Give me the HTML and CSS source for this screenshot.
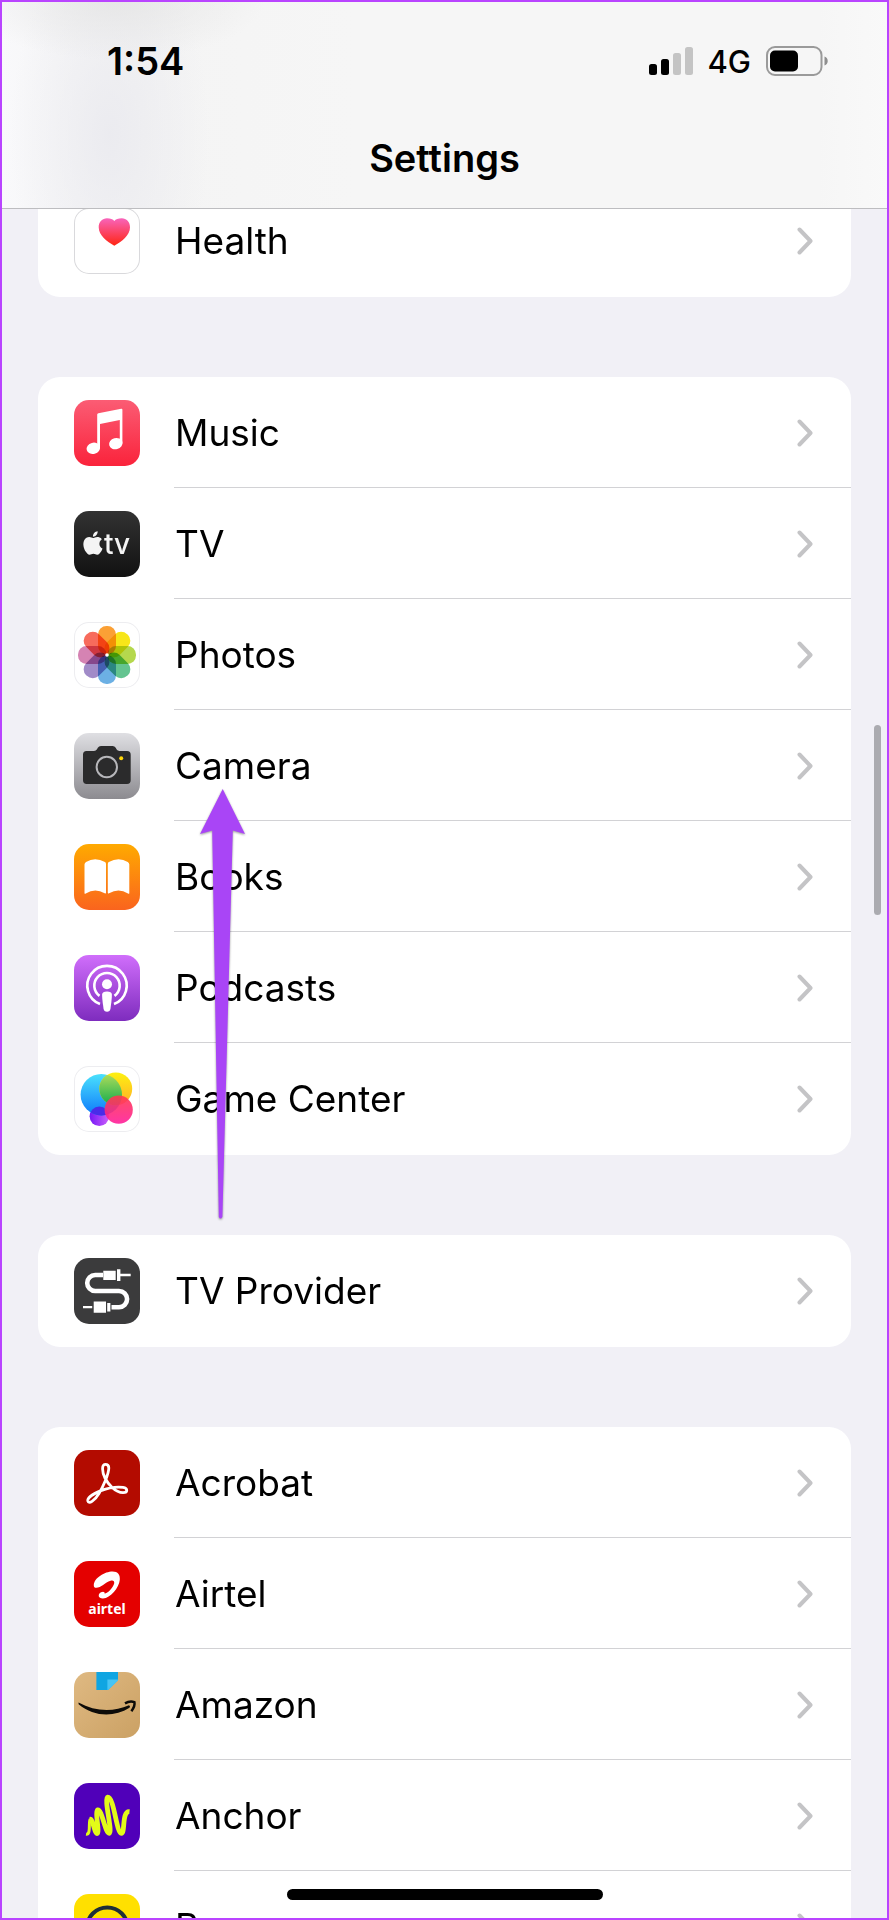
FILE: index.html
```html
<!DOCTYPE html>
<html lang="en">
<head>
    <meta charset="UTF-8">
    <meta name="viewport" content="width=device-width, initial-scale=1.0">
    <title>Settings</title>
    <link rel="stylesheet" href="styles.css">
</head>
<body>

<header class="header">
    <div class="status-bar">
        <span class="time">1:54</span>
        <div class="status-icons">
            <svg class="signal" viewBox="0 0 44 28" aria-hidden="true">
                <rect x="0" y="17" width="8" height="11" rx="2.5"/>
                <rect x="12" y="12" width="8" height="16" rx="2.5"/>
                <rect class="off" x="24" y="6" width="8" height="22" rx="2.5"/>
                <rect class="off" x="36" y="0" width="8" height="28" rx="2.5"/>
            </svg>
            <span class="network">4G</span>
            <svg class="battery" viewBox="0 0 62 30" aria-hidden="true">
                <rect x="1" y="1" width="54.5" height="28" rx="8" fill="none" stroke="#9a9a9a" stroke-width="2"/>
                <rect x="4" y="4.5" width="28" height="21" rx="5"/>
                <path d="M58.5 10.5C62.8 12 62.8 18 58.5 19.5Z" fill="#8e8e8e"/>
            </svg>
        </div>
    </div>
    <h1 class="title">Settings</h1>
</header>

<main class="content">
    <ul class="group">
        <li><a href="#health" class="row">
            <svg class="icon outlined" viewBox="0 0 66 66" aria-hidden="true">
                <defs><linearGradient id="heart" x2="0" y2="1"><stop offset="0" stop-color="#f864bb"/><stop offset="1" stop-color="#ff2512"/></linearGradient></defs>
                <path d="M40.3 37.7C33 33.5 24.7 27.5 24.7 19.3C24.7 14 28.3 10.3 33 10.3C36.5 10.3 39 11.2 40.3 13C41.7 11.2 44.2 10.3 47.8 10.3C52.5 10.3 56 14 56 19.3C56 27.5 47.8 33.5 40.3 37.7Z" fill="url(#heart)"/>
            </svg>
            <span class="label">Health</span>
            <svg class="chevron" viewBox="0 0 16 28" aria-hidden="true"><path d="M2.5 2.5L13.5 14L2.5 25.5"/></svg>
        </a></li>
    </ul>

    <ul class="group">
        <li><a href="#music" class="row">
            <svg class="icon" viewBox="0 0 66 66" aria-hidden="true">
                <defs><linearGradient id="music" x2="0" y2="1"><stop offset="0" stop-color="#fb5c74"/><stop offset="1" stop-color="#fa233b"/></linearGradient></defs>
                <rect width="66" height="66" fill="url(#music)"/>
                <g fill="#fff">
                    <path d="M23.2 14.6Q23.2 13.6 24.4 13.3L47.2 8.8Q48.4 8.6 48.4 9.8V43.5H45.8V20L26 23.9V48.5H23.2Z"/>
                    <ellipse cx="19.3" cy="48.3" rx="6.8" ry="5.6" transform="rotate(-15 19.3 48.3)"/>
                    <ellipse cx="41.8" cy="43.6" rx="6.8" ry="5.6" transform="rotate(-15 41.8 43.6)"/>
                </g>
            </svg>
            <span class="label">Music</span>
            <svg class="chevron" viewBox="0 0 16 28" aria-hidden="true"><path d="M2.5 2.5L13.5 14L2.5 25.5"/></svg>
        </a></li>
        <li><a href="#tv" class="row">
            <svg class="icon" viewBox="0 0 66 66" aria-hidden="true">
                <defs><linearGradient id="tv" x2="0" y2="1"><stop offset="0" stop-color="#323232"/><stop offset="1" stop-color="#111"/></linearGradient></defs>
                <rect width="66" height="66" fill="url(#tv)"/>
                <path transform="translate(7.2 20.2) scale(.98)" fill="#f4f4f4" d="M12.152 6.896c-.948 0-2.415-1.078-3.96-1.04-2.04.027-3.91 1.183-4.961 3.014-2.117 3.675-.546 9.103 1.519 12.09 1.013 1.454 2.208 3.09 3.792 3.039 1.52-.065 2.09-.987 3.935-.987 1.831 0 2.35.987 3.96.948 1.637-.026 2.676-1.48 3.676-2.948 1.156-1.688 1.636-3.325 1.662-3.415-.039-.013-3.182-1.221-3.22-4.857-.026-3.04 2.48-4.494 2.597-4.559-1.429-2.09-3.623-2.324-4.39-2.376-2-.156-3.675 1.09-4.61 1.09zM15.53 3.83c.843-1.012 1.4-2.427 1.245-3.83-1.207.052-2.662.805-3.532 1.818-.78.896-1.454 2.338-1.273 3.714 1.338.104 2.715-.688 3.559-1.701"/>
                <text class="tv-text" x="30" y="43">tv</text>
            </svg>
            <span class="label">TV</span>
            <svg class="chevron" viewBox="0 0 16 28" aria-hidden="true"><path d="M2.5 2.5L13.5 14L2.5 25.5"/></svg>
        </a></li>
        <li><a href="#photos" class="row">
            <svg class="icon outlined light" viewBox="0 0 66 66" aria-hidden="true">
                <g class="petals">
                    <rect x="24" y="4" width="18" height="28.5" rx="8.5" fill="#fba035"/>
                    <rect x="24" y="4" width="18" height="28.5" rx="8.5" fill="#f7e619" transform="rotate(45 33 33)"/>
                    <rect x="24" y="4" width="18" height="28.5" rx="8.5" fill="#b5d84d" transform="rotate(90 33 33)"/>
                    <rect x="24" y="4" width="18" height="28.5" rx="8.5" fill="#64c490" transform="rotate(135 33 33)"/>
                    <rect x="24" y="4" width="18" height="28.5" rx="8.5" fill="#6cb0e4" transform="rotate(180 33 33)"/>
                    <rect x="24" y="4" width="18" height="28.5" rx="8.5" fill="#a18bc8" transform="rotate(225 33 33)"/>
                    <rect x="24" y="4" width="18" height="28.5" rx="8.5" fill="#d583b3" transform="rotate(270 33 33)"/>
                    <rect x="24" y="4" width="18" height="28.5" rx="8.5" fill="#f76b5c" transform="rotate(315 33 33)"/>
                </g>
                <circle cx="33" cy="33" r="1.8" fill="#fff"/>
            </svg>
            <span class="label">Photos</span>
            <svg class="chevron" viewBox="0 0 16 28" aria-hidden="true"><path d="M2.5 2.5L13.5 14L2.5 25.5"/></svg>
        </a></li>
        <li><a href="#camera" class="row">
            <svg class="icon" viewBox="0 0 66 66" aria-hidden="true">
                <defs><linearGradient id="camera" x2="0" y2="1"><stop offset="0" stop-color="#dfdfe3"/><stop offset="1" stop-color="#8c8b90"/></linearGradient></defs>
                <rect width="66" height="66" fill="url(#camera)"/>
                <path d="M12.5 18H20Q22 18 23 16.3L23.8 14.8Q24.8 13 27 13H38.5Q40.7 13 41.7 14.8L42.5 16.3Q43.5 18 45.5 18H53Q56.7 18 56.7 21.7V47.3Q56.7 51 53 51H12.7Q9 51 9 47.3V21.7Q9 18 12.5 18Z" fill="#2b2b2c"/>
                <circle cx="32.8" cy="34" r="10.2" fill="none" stroke="#b7b7bb" stroke-width="2"/>
                <circle cx="47.2" cy="25.3" r="2" fill="#ffd60a"/>
            </svg>
            <span class="label">Camera</span>
            <svg class="chevron" viewBox="0 0 16 28" aria-hidden="true"><path d="M2.5 2.5L13.5 14L2.5 25.5"/></svg>
        </a></li>
        <li><a href="#books" class="row">
            <svg class="icon" viewBox="0 0 66 66" aria-hidden="true">
                <defs><linearGradient id="books" x2="0" y2="1"><stop offset="0" stop-color="#ffaa00"/><stop offset="1" stop-color="#fa641e"/></linearGradient></defs>
                <rect width="66" height="66" fill="url(#books)"/>
                <path d="M10.5 20.5Q10.5 19 12 18Q21 12.5 31 18Q32 18.7 32 20V48.5Q32 50 30.7 49.3Q21 43.5 11.8 49.6Q10.5 50.3 10.5 49ZM55.3 20.5Q55.3 19 53.8 18Q44.8 12.5 34.8 18Q33.8 18.7 33.8 20V48.5Q33.8 50 35.1 49.3Q44.8 43.5 54 49.6Q55.3 50.3 55.3 49Z" fill="#fff"/>
            </svg>
            <span class="label">Books</span>
            <svg class="chevron" viewBox="0 0 16 28" aria-hidden="true"><path d="M2.5 2.5L13.5 14L2.5 25.5"/></svg>
        </a></li>
        <li><a href="#podcasts" class="row">
            <svg class="icon" viewBox="0 0 66 66" aria-hidden="true">
                <defs><linearGradient id="podcasts" x2="0" y2="1"><stop offset="0" stop-color="#d06efb"/><stop offset="1" stop-color="#7e2cbe"/></linearGradient></defs>
                <rect width="66" height="66" fill="url(#podcasts)"/>
                <path d="M26 49A19.7 19.7 0 1 1 40 49M25.5 40.9A12.7 12.7 0 1 1 40.5 40.9" fill="none" stroke="#fff" stroke-width="2.6"/>
                <circle cx="33" cy="29.2" r="5" fill="#fff"/>
                <path d="M28.1 39.8C28.1 37.5 30 36.6 33 36.6S37.9 37.5 37.9 39.8C37.9 43.5 37 50 36.5 53.5C36.1 56 35 56.7 33 56.7S29.9 56 29.5 53.5C29 50 28.1 43.5 28.1 39.8Z" fill="#fff"/>
            </svg>
            <span class="label">Podcasts</span>
            <svg class="chevron" viewBox="0 0 16 28" aria-hidden="true"><path d="M2.5 2.5L13.5 14L2.5 25.5"/></svg>
        </a></li>
        <li><a href="#game-center" class="row">
            <svg class="icon outlined light" viewBox="0 0 66 66" aria-hidden="true">
                <defs>
                    <linearGradient id="gc-blue" x2="0" y2="1"><stop offset="0" stop-color="#4ae1fc"/><stop offset="1" stop-color="#0e79fb"/></linearGradient>
                    <linearGradient id="gc-yellow" x2="0" y2="1"><stop offset="0" stop-color="#fdf110"/><stop offset="1" stop-color="#ffae2a"/></linearGradient>
                    <linearGradient id="gc-green" x2="0" y2="1"><stop offset="0" stop-color="#b6de5b"/><stop offset="1" stop-color="#14ad4d"/></linearGradient>
                    <linearGradient id="gc-red" x2="0" y2="1"><stop offset="0" stop-color="#ff3a4e"/><stop offset="1" stop-color="#ff1e9c"/></linearGradient>
                    <linearGradient id="gc-purple" x2="1" y2="0"><stop offset="0" stop-color="#7518f5"/><stop offset="1" stop-color="#cb5ffb"/></linearGradient>
                    <clipPath id="gc-clip"><circle cx="27.3" cy="28.7" r="20.7"/></clipPath>
                </defs>
                <circle cx="25.3" cy="50.3" r="9.7" fill="url(#gc-purple)"/>
                <circle cx="27.3" cy="28.7" r="20.7" fill="url(#gc-blue)"/>
                <circle cx="41.8" cy="22.8" r="16.4" fill="url(#gc-yellow)"/>
                <circle cx="41.8" cy="22.8" r="16.4" fill="url(#gc-green)" clip-path="url(#gc-clip)"/>
                <circle cx="25.3" cy="50.3" r="9.7" fill="#4a2be8" clip-path="url(#gc-clip)"/>
                <circle cx="44.7" cy="43.7" r="14.1" fill="url(#gc-red)" opacity=".9"/>
            </svg>
            <span class="label">Game Center</span>
            <svg class="chevron" viewBox="0 0 16 28" aria-hidden="true"><path d="M2.5 2.5L13.5 14L2.5 25.5"/></svg>
        </a></li>
    </ul>

    <ul class="group">
        <li><a href="#tv-provider" class="row">
            <svg class="icon" viewBox="0 0 66 66" aria-hidden="true">
                <rect width="66" height="66" fill="#3b3b3c"/>
                <path d="M29 17H21.2A8 8 0 0 0 21.2 33H45A8.1 8.1 0 0 1 45 49.2H37.5" fill="none" stroke="#fff" stroke-width="4.6"/>
                <path d="M46 17H56.7M9 49.2H18.2" stroke="#fff" stroke-width="2.3"/>
                <path d="M29.3 12.7H41.7V22H29.3ZM43 11.3H46.4V23H43ZM19.7 43.4H32V54.8H19.7ZM33.2 45H36.4V53.5H33.2Z" fill="#fff"/>
            </svg>
            <span class="label">TV Provider</span>
            <svg class="chevron" viewBox="0 0 16 28" aria-hidden="true"><path d="M2.5 2.5L13.5 14L2.5 25.5"/></svg>
        </a></li>
    </ul>

    <ul class="group">
        <li><a href="#acrobat" class="row">
            <svg class="icon" viewBox="0 0 66 66" aria-hidden="true">
                <rect width="66" height="66" fill="#b30b00"/>
                <path d="M31.2 14.3C27.5 14.3 28 22 31 28C34 34 41 42.5 49 42.7C54 42.7 54 38 49 37.3C43 36.6 33 38.3 27 40.6C20 43.3 13.2 47.5 13.8 51C14.7 54.5 20.5 51 25 43.5C29 37 34.8 24 34.8 18C34.8 15.5 33 14.3 31.2 14.3Z" fill="none" stroke="#fff" stroke-width="2.8"/>
            </svg>
            <span class="label">Acrobat</span>
            <svg class="chevron" viewBox="0 0 16 28" aria-hidden="true"><path d="M2.5 2.5L13.5 14L2.5 25.5"/></svg>
        </a></li>
        <li><a href="#airtel" class="row">
            <svg class="icon" viewBox="0 0 66 66" aria-hidden="true">
                <rect width="66" height="66" fill="#e40000"/>
                <path d="M19.8 24.5C19.8 17 31 10.6 38.5 10.6C44 10.6 46.2 14 45.8 18.7C45 27 36.5 37 29 37.5C24 37.6 23.5 33.2 27 31.2C29.5 30 31 31 30.6 32.6C33 33 39.5 26.5 40.2 22.3C40.5 20 39 19 36.5 19.8C31 21.5 27 26.8 22.3 26.8C20.6 26.8 19.8 26 19.8 24.5Z" fill="#fff"/>
                <text class="airtel-text" x="33" y="53">airtel</text>
            </svg>
            <span class="label">Airtel</span>
            <svg class="chevron" viewBox="0 0 16 28" aria-hidden="true"><path d="M2.5 2.5L13.5 14L2.5 25.5"/></svg>
        </a></li>
        <li><a href="#amazon" class="row">
            <svg class="icon" viewBox="0 0 66 66" aria-hidden="true">
                <defs><linearGradient id="amazon" x2="1" y2="1"><stop offset="0" stop-color="#dfb982"/><stop offset="1" stop-color="#cba164"/></linearGradient></defs>
                <rect width="66" height="66" fill="url(#amazon)"/>
                <path d="M22.4 0H44V8L34 18H22.4Z" fill="#0fa5e2"/>
                <path d="M33.4 7.6H44V8.4L34.2 18H33.4Z" fill="#46c4f4"/>
                <path d="M4.5 30.5C21 39.6 39 40.4 55 33.2Q56.8 34 55.5 35.7C40 45.4 20 45 4.6 32.2Z" fill="#0d0b08"/>
                <path d="M51 31.3C54 29.6 58 29.3 60.4 30.1C61 33 59.5 36.5 57.4 39.2" fill="none" stroke="#0d0b08" stroke-width="2.5"/>
            </svg>
            <span class="label">Amazon</span>
            <svg class="chevron" viewBox="0 0 16 28" aria-hidden="true"><path d="M2.5 2.5L13.5 14L2.5 25.5"/></svg>
        </a></li>
        <li><a href="#anchor" class="row">
            <svg class="icon" viewBox="0 0 66 66" aria-hidden="true">
                <rect width="66" height="66" fill="#5000b9"/>
                <path d="M12 51.3C17.5 52 14 38 16.3 36.3" fill="none" stroke="#e3fb18" stroke-width="3"/>
                <path d="M16 36.3C19 35.5 20.3 50.5 23.2 50.5C26 49.8 20.5 28 23.8 26.8C28 26.3 31 50 35.3 50.3C39 49.8 29.5 15 33.8 14.2C40 14 42.5 50 47.3 50.3C51.5 50 47.5 28 55.5 28.7" fill="none" stroke="#e3fb18" stroke-width="4.8" stroke-linejoin="round"/>
            </svg>
            <span class="label">Anchor</span>
            <svg class="chevron" viewBox="0 0 16 28" aria-hidden="true"><path d="M2.5 2.5L13.5 14L2.5 25.5"/></svg>
        </a></li>
        <li><a href="#b" class="row">
            <svg class="icon" viewBox="0 0 66 66" aria-hidden="true">
                <rect width="66" height="66" fill="#ffe000"/>
                <circle cx="33.3" cy="34" r="20.5" fill="none" stroke="#1f2e38" stroke-width="4"/>
            </svg>
            <span class="label">B</span>
            <svg class="chevron" viewBox="0 0 16 28" aria-hidden="true"><path d="M2.5 2.5L13.5 14L2.5 25.5"/></svg>
        </a></li>
    </ul>

    <!-- arrow pointing at Camera -->
    <svg class="arrow" viewBox="0 0 46 432" aria-hidden="true">
        <path d="M22.7 0L45 45L32.8 41.5L22.4 428Q20.5 431 18.8 428L12.2 41.5L0 45Z"/>
    </svg>
</main>

<div class="scrollbar"></div>
<div class="home-indicator"></div>
<div class="frame"></div>

</body>
</html>
```
FILE: styles.css
```css
* {
    box-sizing: border-box;
}

body {
    margin: 0;
    height: 100vh;
    overflow: hidden;
    background-color: #f1f0f6;
    color: #000;
    font-family: Inter, "Liberation Sans", sans-serif;
}

/* Header */
.header {
    position: fixed;
    z-index: 2;
    top: 0;
    left: 0;
    right: 0;
    padding-top: 37px;
    background-color: #f6f6f6;
    background-image:
        radial-gradient(ellipse 150px 60px at 115px 0, rgba(228, 228, 228, 0.8), transparent),
        radial-gradient(ellipse 100px 200px at 110px 135px, rgba(234, 234, 239, 0.9), transparent),
        linear-gradient(to right, #f9f9fb, #f4f4f4 15%, #f6f6f6 40%, #f6f6f6 92%, #f9f9f9);
    border-bottom: 1px solid #bdbdc0;
}

.status-bar {
    display: flex;
    justify-content: space-between;
    align-items: center;
    height: 48px;
    padding: 0 61px 0 107px;
}

.time {
    font-size: 38px;
    font-weight: 600;
}

.status-icons {
    display: flex;
    align-items: center;
}

.signal {
    width: 44px;
    height: 28px;
}

.signal .off {
    fill: #c4c4c4;
}

.network {
    margin: 0 15px 0 14px;
    font-size: 31px;
    font-weight: 500;
}

.battery {
    width: 62px;
    height: 30px;
}

.title {
    margin: 0;
    padding: 50px 0 26px;
    font-size: 38px;
    line-height: 47px;
    font-weight: 600;
    text-align: center;
}

/* Settings list */
.content {
    position: relative;
    padding: 185px 38px 0;
}

.group {
    margin: 0 0 80px;
    padding: 0 0 1px;
    list-style: none;
    background-color: #fff;
    border-radius: 22px;
}

.row {
    position: relative;
    display: flex;
    align-items: center;
    gap: 35px;
    height: 111px;
    padding: 0 38px 0 36px;
    color: #000;
    text-decoration: none;
}

/* Separator starts where the label starts */
li:not(:last-child) .row::after {
    content: "";
    position: absolute;
    left: 136px;
    right: 0;
    bottom: 0;
    height: 1px;
    background-color: #d2d2d5;
}

.label {
    flex: 1;
    font-size: 37px;
    line-height: 48px;
}

.icon {
    width: 66px;
    height: 66px;
    border-radius: 15px;
}

.icon.outlined {
    box-shadow: inset 0 0 0 1px #d9d9dc;
}

.icon.light {
    box-shadow: inset 0 0 0 1px #ededf0;
}

.petals {
    isolation: isolate;
}

.petals rect {
    mix-blend-mode: multiply;
}

.tv-text {
    font-size: 28px;
    font-weight: 500;
    fill: #f4f4f4;
}

.airtel-text {
    font-family: "Noto Sans", "Open Sans", sans-serif;
    font-size: 14px;
    font-weight: 700;
    text-anchor: middle;
    fill: #fff;
}

.chevron {
    width: 16px;
    height: 28px;
    fill: none;
    stroke: #c4c4c6;
    stroke-width: 4;
    stroke-linecap: round;
    stroke-linejoin: round;
}

/* Overlays */
.arrow {
    position: absolute;
    top: 789px;
    left: 200px;
    width: 46px;
    height: 432px;
    fill: #a945f6;
    filter: drop-shadow(0 1px 1px rgba(0, 0, 0, 0.4));
}

.scrollbar {
    position: fixed;
    top: 725px;
    right: 8px;
    width: 7px;
    height: 190px;
    border-radius: 4px;
    background-color: #ababb0;
}

.home-indicator {
    position: fixed;
    bottom: 20px;
    left: 50%;
    width: 316px;
    height: 11px;
    border-radius: 6px;
    background-color: #000;
    transform: translateX(-50%);
}

.frame {
    position: fixed;
    z-index: 3;
    inset: 0;
    border: 2px solid #b944ff;
    pointer-events: none;
}
```
